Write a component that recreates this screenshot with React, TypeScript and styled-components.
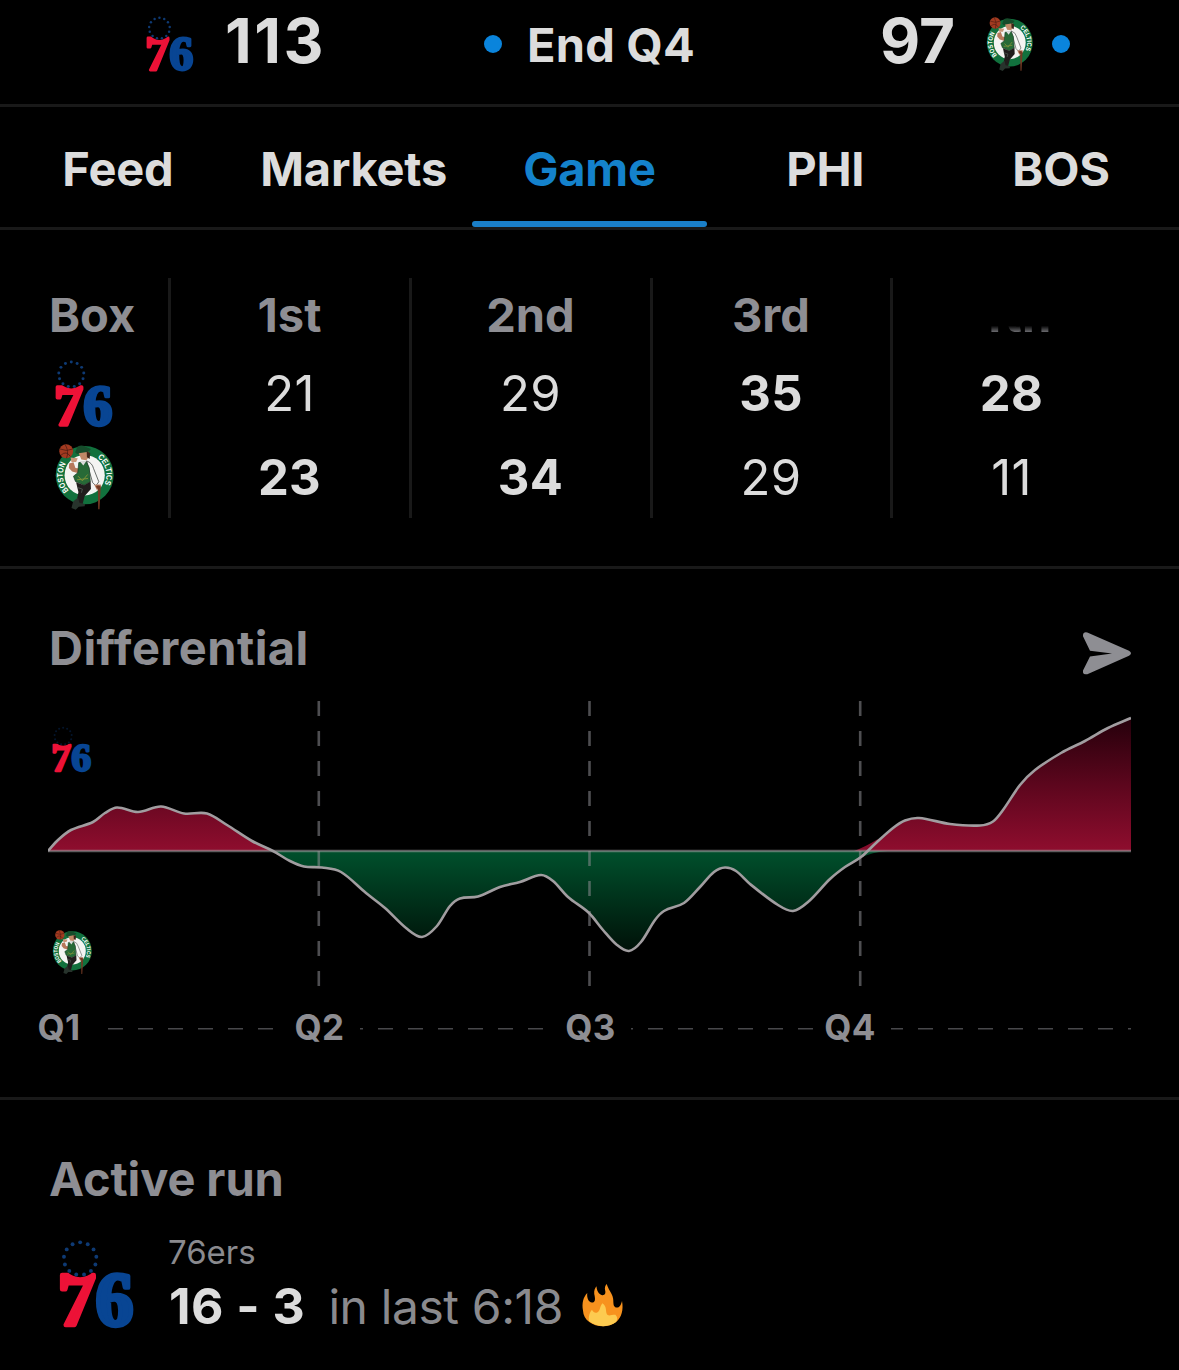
import React from 'react';
import styled, { createGlobalStyle, css } from 'styled-components';

const GlobalStyle = createGlobalStyle`
  * {
    box-sizing: border-box;
  }

  body {
    margin: 0;
    background: #000;
    font-family: Inter, 'Liberation Sans', sans-serif;
    font-feature-settings: 'calt' 0, 'liga' 0;
    color: #dcdcdc;
  }
`;

const Page = styled.div`
  width: 1179px;
  height: 1370px;
  overflow: hidden;
  background: #000;
`;

const ScoreBar = styled.header`
  display: grid;
  grid-template-columns: 484px 396px 1fr;
  height: 107px;
  border-bottom: 3px solid #191919;
`;

const ScoreGroup = styled.div<{ $indent?: number }>`
  display: flex;
  align-items: center;
  height: 88px;
  padding-left: ${({ $indent }) => $indent ?? 0}px;
`;

const Score = styled.span<{ $spacing: number; $before?: number; $after?: number }>`
  margin: -6px ${({ $after }) => $after ?? 0}px 0 ${({ $before }) => $before ?? 0}px;
  font-size: 62px;
  font-weight: 690;
  line-height: 62px;
  letter-spacing: ${({ $spacing }) => $spacing}px;
  white-space: nowrap;
`;

const Dot = styled.span<{ $before?: number }>`
  width: 18px;
  height: 18px;
  margin-left: ${({ $before }) => $before ?? 0}px;
  border-radius: 50%;
  background: #0a84dc;
`;

const Status = styled.span`
  margin-left: 25px;
  font-size: 47px;
  font-weight: 680;
  letter-spacing: 0.2px;
  white-space: nowrap;
`;

const Tabs = styled.nav`
  display: grid;
  grid-template-columns: repeat(5, 1fr);
  height: 123px;
  border-bottom: 3px solid #191919;
`;

const Tab = styled.button<{ $active?: boolean }>`
  display: flex;
  flex-direction: column;
  padding: 0;
  border: 0;
  background: none;
  font-family: inherit;
  font-size: 47px;
  font-weight: 670;
  letter-spacing: -0.2px;
  line-height: 56px;
  color: ${({ $active }) => ($active ? '#1482cc' : '#dcdcdc')};
  white-space: nowrap;

  &::after {
    content: '';
    width: 100%;
    height: 6px;
    border-radius: 3px;
    background: ${({ $active }) => ($active ? '#1a7fc8' : 'transparent')};
  }
`;

const TabLabel = styled.span`
  width: 100%;
  height: 114px;
  padding-top: 34px;
  text-align: center;
`;

const BoxScore = styled.section`
  display: grid;
  grid-template-columns: 168px 241px 241px 240px 241px;
  height: 339px;
  padding: 48px 0;
  border-bottom: 3px solid #191919;
`;

const BoxColumn = styled.div<{ $first?: boolean }>`
  display: grid;
  grid-template-rows: 74px 83px 85px;
  align-items: center;
  justify-items: ${({ $first }) => ($first ? 'start' : 'center')};
  height: 240px;
  padding-left: ${({ $first }) => ($first ? 49 : 0)}px;
  padding-right: ${({ $first }) => ($first ? 0 : 1)}px;
  border-left: ${({ $first }) => ($first ? 'none' : '3px solid #191919')};
`;

const BoxLabel = styled.span<{ $faded?: boolean }>`
  font-size: 47px;
  font-weight: 670;
  line-height: 56px;
  color: #8e8e93;
  white-space: nowrap;

  ${({ $faded }) =>
    $faded &&
    css`
      padding-left: 1px;
      mask-image: linear-gradient(transparent 69%, #000 84%);
    `}
`;

const Points = styled.span<{ $won: boolean }>`
  font-size: 49px;
  font-weight: ${({ $won }) => ($won ? 690 : 400)};
  line-height: 58px;
  letter-spacing: 0.3px;
  color: #dcdcdc;
`;

const LogoCell = styled.div<{ $x: number }>`
  display: flex;
  margin-left: ${({ $x }) => $x}px;
`;

const Differential = styled.section`
  height: 531px;
  padding: 0 48px;
  border-bottom: 3px solid #191919;
`;

const SectionHead = styled.div`
  display: flex;
  align-items: flex-start;
  justify-content: space-between;
  height: 131px;
  padding: 51px 0 0 1px;
`;

const SectionTitle = styled.h2<{ $spacing?: number }>`
  margin: 0;
  font-size: 47px;
  font-weight: 660;
  line-height: 56px;
  letter-spacing: ${({ $spacing }) => $spacing ?? 0}px;
  color: #8e8e93;
  white-space: nowrap;
`;

const SendIcon = styled.svg`
  width: 48px;
  height: 43px;
  margin-top: 12px;
`;

const ChartArea = styled.div`
  position: relative;
  height: 290px;
`;

const ChartSvg = styled.svg`
  display: block;
  width: 1083px;
  height: 290px;
`;

const ChartBadge = styled.div<{ $top: number; $left: number }>`
  position: absolute;
  top: ${({ $top }) => $top}px;
  left: ${({ $left }) => $left}px;
  display: flex;
`;

const Axis = styled.div`
  display: flex;
  width: 1113px;
  height: 44px;
  margin: 16px 0 0 -30px;
  background: repeating-linear-gradient(90deg, #48484b 0 15px, transparent 15px 30px) 0 22px / 100% 1.5px no-repeat;
`;

const AxisLabel = styled.span<{ $width: number; $before: number; $shift?: number }>`
  width: ${({ $width }) => $width}px;
  margin-left: ${({ $before }) => $before}px;
  padding-right: ${({ $shift }) => $shift ?? 0}px;
  background: #000;
  font-size: 35px;
  font-weight: 670;
  line-height: 43px;
  letter-spacing: 0.4px;
  text-align: center;
  color: #8e8e93;
`;

const ActiveRun = styled.section`
  padding: 51px 48px 0 49px;
`;

const RunRow = styled.div`
  display: flex;
  align-items: flex-start;
  margin-top: 34px;
  padding-left: 10px;
`;

const RunText = styled.div`
  margin-left: 35px;
`;

const TeamName = styled.div`
  margin-top: -8px;
  font-size: 33px;
  line-height: 38px;
  color: #8a8a8e;
`;

const RunLine = styled.div`
  display: flex;
  align-items: center;
  height: 60px;
  margin: 5px 0 0 1px;
  white-space: nowrap;
`;

const RunScore = styled.span`
  font-size: 50px;
  font-weight: 700;
  letter-spacing: 0.5px;
`;

const RunTime = styled.span`
  margin: 0 18px 0 23px;
  font-size: 48px;
  letter-spacing: -0.4px;
  color: #8a8a8e;
`;

const LogoSvg = styled.svg`
  display: block;
  flex: none;
  overflow: visible;
`;

const stars = Array.from({ length: 13 }, (_, i) => {
  const a = (i / 13) * Math.PI * 2 - Math.PI / 2;
  return { x: 96 + 37 * Math.cos(a), y: 68 + 37 * Math.sin(a) };
});

const SixersLogo: React.FC<{ width: number; height: number; dim?: boolean }> = ({ width, height, dim }) => (
  <LogoSvg width={width} height={height} viewBox="48 28 168 197" preserveAspectRatio="none">
    <text
      transform="translate(45 219)"
      fontFamily="Liberation Serif, serif"
      fontWeight="700"
      fontSize="172"
      strokeLinejoin="round"
      strokeWidth="10"
    >
      <tspan fill="#ed1237" stroke="#ed1237">7</tspan>
      <tspan fill="#084593" stroke="#084593">6</tspan>
    </text>
    {/* the ring bites into the top of the seven */}
    <circle cx="96" cy="68" r="42" fill="#000" />
    {stars.map((s) => (
      <circle key={s.x} cx={s.x} cy={s.y} r="4.4" fill={dim ? '#04152c' : '#0e3a74'} />
    ))}
  </LogoSvg>
);

const CelticsLogo: React.FC<{ width: number; height: number; id: string }> = ({ width, height, id }) => (
  <LogoSvg width={width} height={height} viewBox="52 278 176 202" preserveAspectRatio="none">
    <defs>
      <path id={`${id}-l`} d="M 91 418 A 66 66 0 0 1 84 335" />
      <path id={`${id}-r`} d="M 178 319 A 66 66 0 0 1 197 404" />
    </defs>
    <circle cx="139" cy="372" r="88" fill="#11713d" />
    <circle cx="139" cy="372" r="61" fill="#f4f4f2" />
    <g fontFamily="Liberation Sans, sans-serif" fontWeight="700" fontSize="25" fill="#fff">
      <text textLength="87" lengthAdjust="spacingAndGlyphs">
        <textPath href={`#${id}-l`}>BOSTON</textPath>
      </text>
      <text textLength="90" lengthAdjust="spacingAndGlyphs">
        <textPath href={`#${id}-r`}>CELTICS</textPath>
      </text>
    </g>
    {/* basketball */}
    <circle cx="83" cy="300" r="21" fill="#a23a20" />
    <path d="M64 293 Q84 302 103 293 M80 280 Q92 300 84 321 M67 312 Q83 296 96 316" fill="none" stroke="#3c1710" strokeWidth="2" />
    {/* hat and head */}
    <path d="M110 303 L117 286 Q132 278 145 288 L158 293 L150 302 L116 308 Z" fill="#164c2b" />
    <path d="M121 306 L151 301 L153 316 L144 327 L129 325 Z" fill="#c08867" />
    <path d="M145 300 L156 305 L154 323 L146 318 Z" fill="#3b2519" />
    {/* arms */}
    <path d="M92 337 L105 333 L111 350 L124 352 L120 366 L101 361 L91 350 Z" fill="#b7795b" />
    <path d="M96 319 L118 321 L113 332 L99 332 Z" fill="#c99778" />
    <path d="M145 329 Q162 335 166 352 L182 392 L173 404 L163 394 L151 352 Z" fill="#f7f7f5" stroke="#252b27" strokeWidth="2" />
    <path d="M168 401 L188 400 L189 409 L176 417 Z" fill="#b7795b" />
    {/* vest */}
    <path d="M121 334 L144 331 L153 350 L156 392 L137 402 L111 391 L105 375 L118 365 Z" fill="#276a37" stroke="#163622" strokeWidth="2" />
    <path d="M119 375 L132 389 L148 370 M116 386 L149 382" fill="none" stroke="#7e9138" strokeWidth="3" />
    <path d="M124 330 L135 343 L144 329" fill="#ddd" />
    {/* legs and shoes */}
    <path d="M113 393 L137 402 L157 391 L158 414 L139 435 L132 462 L113 459 L120 423 Z" fill="#201d1c" />
    <path d="M104 451 L119 439 L123 455 L140 459 L139 466 L121 467 L112 476 L99 471 Z" fill="#27332c" />
    <path d="M116 409 L132 414 L129 425" fill="none" stroke="#5c6963" strokeWidth="2" />
    {/* cane */}
    <path d="M173 407 Q180 399 188 407 L184 475 L180 475 L179 414 Z" fill="#743a24" />
  </LogoSvg>
);

const FlameIcon: React.FC = () => (
  <LogoSvg width="43" height="43" viewBox="62 44 128 130">
    <path
      d="M67 121 C63 99 68 80 80 68 C78 82 84 96 94 97 C106 97 104 84 101 71 C100 61 103 53 108 48 C108 61 115 73 125 75 C134 76 136 68 134 61 C132 52 134 45 139 41 C142 56 156 69 158 85 C160 98 157 108 166 112 C177 114 182 104 185 92 C190 118 184 142 167 156 C146 173 108 173 86 156 C74 147 68 136 67 121 Z"
      fill="#f7921e"
    />
    <path
      d="M85 153 C83 139 87 127 94 119 C98 126 104 130 110 127 C120 122 117 108 126 99 C139 108 135 120 139 132 C144 140 151 134 165 134 C172 141 172 147 167 156 C146 173 108 173 85 153 Z"
      fill="#fdcb50"
    />
  </LogoSvg>
);

const BASELINE = 851;

// lead over time, as chart coordinates
const lead: [number, number][] = [
  [48, 851], [58, 840], [71, 830], [93, 822], [105, 813], [117, 807.5], [138, 812], [161, 806.5], [184, 813.5],
  [207, 813.5], [227, 825], [252, 841], [273, 851], [290, 861], [304, 866.5], [322, 867.5], [341, 872], [366, 893],
  [385, 908], [406, 928], [422, 937], [437, 926], [450, 906], [460, 898.5], [478, 896.5], [500, 887], [520, 882],
  [541, 875], [553, 881], [568, 897], [589, 913], [603, 930], [617, 945], [629, 951], [641, 942], [655, 920],
  [664, 911], [684, 903], [700, 887], [714, 872], [725, 867.5], [736, 871], [750, 884], [778, 905], [793, 911],
  [808, 902], [830, 879], [845, 867], [861, 857], [876, 843], [893, 828], [905, 820.5], [919, 818], [950, 824],
  [980, 825.5], [993, 821.5], [1003, 810], [1020, 785], [1035, 770], [1061, 753], [1085, 741], [1108, 728], [1131, 718],
];

const slopeAt = (pts: [number, number][], i: number) => {
  const a = pts[Math.max(i - 1, 0)];
  const b = pts[Math.min(i + 1, pts.length - 1)];
  return (b[1] - a[1]) / (b[0] - a[0]);
};

const smooth = (pts: [number, number][]) =>
  pts.slice(1).reduce((d, p, i) => {
    const prev = pts[i];
    const dx = (p[0] - prev[0]) / 3;
    const c1 = `${prev[0] + dx} ${prev[1] + dx * slopeAt(pts, i)}`;
    const c2 = `${p[0] - dx} ${p[1] - dx * slopeAt(pts, i + 1)}`;
    return `${d} C ${c1} ${c2} ${p[0]} ${p[1]}`;
  }, `M ${pts[0][0]} ${pts[0][1]}`);

const line = smooth(lead);
const area = `${line} L 1131 ${BASELINE} L 48 ${BASELINE} Z`;

const DifferentialChart: React.FC = () => (
  <ChartSvg viewBox="48 700 1083 290">
    <defs>
      <linearGradient id="phi" gradientUnits="userSpaceOnUse" x1="0" y1="718" x2="0" y2="851">
        <stop offset="0" stopColor="#25000b" />
        <stop offset="0.5" stopColor="#5c061d" />
        <stop offset="1" stopColor="#8f0d2e" />
      </linearGradient>
      <linearGradient id="bos" gradientUnits="userSpaceOnUse" x1="0" y1="851" x2="0" y2="951">
        <stop offset="0" stopColor="#00502c" />
        <stop offset="1" stopColor="#001108" />
      </linearGradient>
      <clipPath id="above">
        <rect x="48" y="700" width="1083" height="151" />
      </clipPath>
      <clipPath id="below">
        <rect x="48" y="851" width="1083" height="139" />
      </clipPath>
    </defs>
    <path d={area} fill="url(#phi)" clipPath="url(#above)" />
    <path d={area} fill="url(#bos)" clipPath="url(#below)" />
    <path d="M854 851 Q865 847 878 839 L872 851 Z" fill="#850d2c" />
    <path d="M860 858 Q872 852 888 851 L860 851 Z" fill="#00502c" />
    {[318.8, 589.5, 860.2].map((x) => (
      <path key={x} d={`M${x} 701 V987`} stroke="#8e8e93" strokeOpacity="0.55" strokeWidth="2.6" strokeDasharray="15 15" />
    ))}
    <path d={`M48 ${BASELINE} H1131`} stroke="#9c9a9c" strokeOpacity="0.6" strokeWidth="2.5" />
    <path d={line} fill="none" stroke="#a19da0" strokeWidth="2.6" />
  </ChartSvg>
);

const quarters = [
  { label: '1st', phi: 21, bos: 23 },
  { label: '2nd', phi: 29, bos: 34 },
  { label: '3rd', phi: 35, bos: 29 },
  { label: '4th', phi: 28, bos: 11, faded: true },
];

const App: React.FC = () => {
  return (
    <>
      <GlobalStyle />
      <Page>
        <ScoreBar>
          <ScoreGroup $indent={146}>
            <SixersLogo width={47} height={55} />
            <Score $before={32} $spacing={2.5}>113</Score>
          </ScoreGroup>
          <ScoreGroup>
            <Dot />
            <Status>End Q4</Status>
          </ScoreGroup>
          <ScoreGroup>
            <Score $after={32} $spacing={0}>97</Score>
            <CelticsLogo width={46} height={55} id="top" />
            <Dot $before={19} />
          </ScoreGroup>
        </ScoreBar>

        <Tabs>
          <Tab>
            <TabLabel>Feed</TabLabel>
          </Tab>
          <Tab>
            <TabLabel>Markets</TabLabel>
          </Tab>
          <Tab $active>
            <TabLabel>Game</TabLabel>
          </Tab>
          <Tab>
            <TabLabel>PHI</TabLabel>
          </Tab>
          <Tab>
            <TabLabel>BOS</TabLabel>
          </Tab>
        </Tabs>

        <BoxScore>
          <BoxColumn $first>
            <BoxLabel>Box</BoxLabel>
            <LogoCell $x={6}>
              <SixersLogo width={57} height={66} />
            </LogoCell>
            <LogoCell $x={7}>
              <CelticsLogo width={58} height={67} id="box" />
            </LogoCell>
          </BoxColumn>
          {quarters.map((q) => (
            <BoxColumn key={q.label}>
              <BoxLabel $faded={q.faded}>{q.label}</BoxLabel>
              <Points $won={q.phi > q.bos}>{q.phi}</Points>
              <Points $won={q.bos > q.phi}>{q.bos}</Points>
            </BoxColumn>
          ))}
        </BoxScore>

        <Differential>
          <SectionHead>
            <SectionTitle $spacing={0.45}>Differential</SectionTitle>
            <SendIcon viewBox="729 35 144 128">
              <path
                d="M742 36 L867 91 Q879 98 867 106 L742 161 Q727 164 729 150 L750 108 L816 99 L750 91 L729 47 Q728 33 742 36 Z"
                fill="#8e8e93"
              />
            </SendIcon>
          </SectionHead>
          <ChartArea>
            <DifferentialChart />
            <ChartBadge $top={27} $left={4}>
              <SixersLogo width={39} height={45} dim />
            </ChartBadge>
            <ChartBadge $top={230} $left={5}>
              <CelticsLogo width={39} height={45} id="chart" />
            </ChartBadge>
          </ChartArea>
          <Axis>
            <AxisLabel $before={0} $width={82}>Q1</AxisLabel>
            <AxisLabel $before={179} $width={81}>Q2</AxisLabel>
            <AxisLabel $before={190} $width={81}>Q3</AxisLabel>
            <AxisLabel $before={182} $width={78} $shift={4}>Q4</AxisLabel>
          </Axis>
        </Differential>

        <ActiveRun>
          <SectionTitle $spacing={-0.1}>Active run</SectionTitle>
          <RunRow>
            <SixersLogo width={74} height={87} />
            <RunText>
              <TeamName>76ers</TeamName>
              <RunLine>
                <RunScore>16 - 3</RunScore>
                <RunTime>in last 6:18</RunTime>
                <FlameIcon />
              </RunLine>
            </RunText>
          </RunRow>
        </ActiveRun>
      </Page>
    </>
  );
};

export default App;
